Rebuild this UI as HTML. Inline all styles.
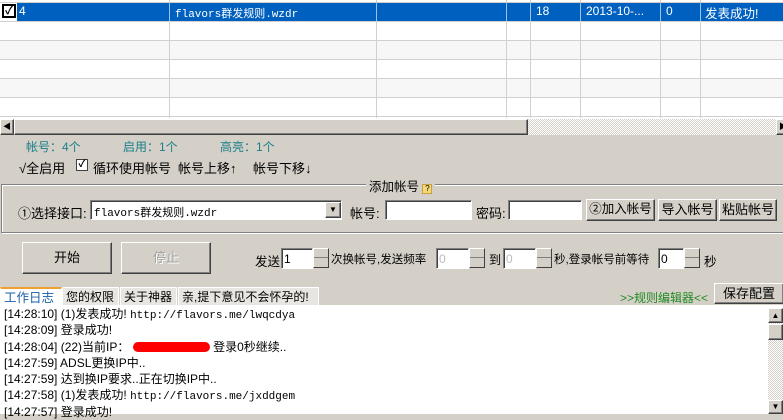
<!DOCTYPE html>
<html><head><meta charset="utf-8"><style>
*{box-sizing:border-box;margin:0;padding:0}
body{width:783px;height:414px;overflow:hidden;background:#d4d0c8;font-family:"Liberation Sans","Noto Sans CJK SC","WenQuanYi Zen Hei",sans-serif;font-size:12px;color:#000;position:relative}
.a{position:absolute;white-space:nowrap}
.mono{font-family:"Liberation Mono","Noto Sans CJK SC",monospace;font-size:11px}
.btn{position:absolute;background:#d4d0c8;border:1px solid;border-color:#fff #404040 #404040 #fff;box-shadow:inset -1px -1px #808080;text-align:center;white-space:nowrap}
.inp{position:absolute;background:#fff;border:1px solid;border-color:#808080 #fff #fff #808080;box-shadow:inset 1px 1px #404040}
.spin{position:absolute;width:16px;height:20px;background:#d4d0c8;border:1px solid;border-color:#fff #404040 #404040 #fff}
.spin:after{content:"";position:absolute;left:0;right:0;top:8px;border-top:1px solid #808080}
.vl{position:absolute;top:0;width:1px;height:118px;background:#d0d0d0}
.hl{position:absolute;left:0;width:783px;height:1px;background:#d0d0d0}
.tab{position:absolute;top:287px;height:19px;background:#e8e6e0;border:1px solid #fff;border-bottom:none;font-size:12px;padding:0 3px;line-height:18px;white-space:nowrap;overflow:visible}
.log div{height:16.3px;line-height:16px;white-space:nowrap}
</style></head><body>
<div class="a" style="left:0;top:0;width:783px;height:119px;background:#fff"></div>
<div class="a" style="left:0;top:40px;width:783px;height:19px;background:#f7f7f7"></div>
<div class="a" style="left:0;top:78px;width:783px;height:19px;background:#f7f7f7"></div>
<div class="hl" style="top:2px"></div>
<div class="hl" style="top:21px"></div><div class="hl" style="top:40px"></div><div class="hl" style="top:59px"></div><div class="hl" style="top:78px"></div><div class="hl" style="top:97px"></div><div class="hl" style="top:116px"></div>
<div class="vl" style="left:169px"></div><div class="vl" style="left:376px"></div><div class="vl" style="left:506px"></div><div class="vl" style="left:530px"></div><div class="vl" style="left:580px"></div><div class="vl" style="left:660px"></div><div class="vl" style="left:700px"></div>
<div class="a" style="left:17px;top:3px;width:766px;height:18px;background:#0060bf"></div>
<div class="vl" style="left:169px;height:19px;top:2px;background:#9fc0e8"></div><div class="vl" style="left:376px;height:19px;top:2px;background:#9fc0e8"></div><div class="vl" style="left:506px;height:19px;top:2px;background:#9fc0e8"></div><div class="vl" style="left:530px;height:19px;top:2px;background:#9fc0e8"></div><div class="vl" style="left:580px;height:19px;top:2px;background:#9fc0e8"></div><div class="vl" style="left:660px;height:19px;top:2px;background:#9fc0e8"></div><div class="vl" style="left:700px;height:19px;top:2px;background:#9fc0e8"></div>
<div class="a" style="left:2px;top:4px;width:14px;height:14px;background:#fff;border:2px solid #000;font-size:11px;line-height:10px;text-align:center;font-weight:bold">✓</div>
<div class="a" style="color:#fff;left:19px;top:4px">4</div>
<div class="a mono" style="color:#fff;left:175px;top:5px">flavors群发规则.wzdr</div>
<div class="a" style="color:#fff;left:536px;top:4px">18</div>
<div class="a" style="color:#fff;left:586px;top:4px">2013-10-...</div>
<div class="a" style="color:#fff;left:666px;top:4px">0</div>
<div class="a" style="color:#fff;left:705px;top:3px;font-size:12.5px">发表成功!</div>
<div class="a" style="left:0;top:119px;width:783px;height:16px;background:repeating-conic-gradient(#fff 0 25%,#d4d0c8 0 50%) 0 0/2px 2px"></div>
<div class="btn" style="left:0;top:119px;width:14px;height:16px;font-size:8px;line-height:14px">◀</div>
<div class="btn" style="left:14px;top:119px;width:514px;height:16px"></div>
<div class="btn" style="left:776px;top:119px;width:14px;height:16px;font-size:8px;line-height:14px">▶</div>
<div class="a" style="left:26px;top:138px;color:#1a7f8a">帐号：4个</div>
<div class="a" style="left:123px;top:138px;color:#1a7f8a">启用：1个</div>
<div class="a" style="left:220px;top:138px;color:#1a7f8a">高亮：1个</div>
<div class="a" style="left:19px;top:158px;font-size:13px">√全启用</div>
<div class="a" style="left:76px;top:159px;width:12px;height:12px;background:#fff;border:1px solid #404040;font-size:10px;line-height:10px;text-align:center;font-weight:bold">✓</div>
<div class="a" style="left:93px;top:158px;font-size:13px">循环使用帐号</div>
<div class="a" style="left:178px;top:158px;font-size:13px">帐号上移↑</div>
<div class="a" style="left:253px;top:158px;font-size:13px">帐号下移↓</div>
<div class="a" style="left:1px;top:184px;width:784px;height:49px;border:1px solid #808080;box-shadow:1px 1px #fff,inset 1px 1px #fff"></div>
<div class="a" style="left:366px;top:176px;background:#d4d0c8;padding:0 3px;font-size:12.5px">添加帐号 <span style="display:inline-block;width:10px;height:10px;background:#f4d77a;border:1px solid #c8a040;font-size:8px;line-height:8px;text-align:center">?</span></div>
<div class="a" style="left:18px;top:203px;font-size:13px">①选择接口:</div>
<div class="inp" style="left:90px;top:200px;width:252px;height:20px"></div>
<div class="a mono" style="left:94px;top:204px">flavors群发规则.wzdr</div>
<div class="btn" style="left:325px;top:202px;width:16px;height:16px;font-size:8px;line-height:14px">▼</div>
<div class="a" style="left:350px;top:203px;font-size:13px">帐号:</div>
<div class="inp" style="left:385px;top:200px;width:87px;height:20px"></div>
<div class="a" style="left:476px;top:203px;font-size:13px">密码:</div>
<div class="inp" style="left:508px;top:200px;width:74px;height:20px"></div>
<div class="btn" style="left:586px;top:199px;width:69px;height:22px;line-height:19px;font-size:12.5px">②加入帐号</div>
<div class="btn" style="left:658px;top:199px;width:59px;height:22px;line-height:19px;font-size:13px">导入帐号</div>
<div class="btn" style="left:719px;top:199px;width:58px;height:22px;line-height:19px;font-size:13px">粘贴帐号</div>
<div class="btn" style="left:22px;top:242px;width:90px;height:32px;line-height:29px;font-size:13px">开始</div>
<div class="btn" style="left:121px;top:242px;width:90px;height:32px;line-height:29px;font-size:13px;color:#a0a0a0;text-shadow:1px 1px #fff">停止</div>
<div class="a" style="left:255px;top:251px;font-size:12.5px">发送</div>
<div class="inp" style="left:281px;top:248px;width:32px;height:21px"></div><div class="a" style="left:284px;top:252px">1</div>
<div class="spin" style="left:313px;top:248px"></div>
<div class="a" style="left:331px;top:251px;font-size:11.5px">次换帐号,发送频率</div>
<div class="inp" style="left:436px;top:248px;width:33px;height:21px"></div><div class="a" style="left:439px;top:252px;color:#bbb">0</div>
<div class="spin" style="left:469px;top:248px"></div>
<div class="a" style="left:489px;top:251px;font-size:12px">到</div>
<div class="inp" style="left:503px;top:248px;width:33px;height:21px"></div><div class="a" style="left:506px;top:252px;color:#bbb">0</div>
<div class="spin" style="left:536px;top:248px"></div>
<div class="a" style="left:554px;top:251px;font-size:11.5px">秒,登录帐号前等待</div>
<div class="inp" style="left:658px;top:248px;width:26px;height:21px"></div><div class="a" style="left:661px;top:252px">0</div>
<div class="spin" style="left:684px;top:248px"></div>
<div class="a" style="left:704px;top:251px;font-size:12.5px">秒</div>
<div class="tab" style="left:0;width:62px;background:#fff;border-top:2px solid #f0a030;color:#1a5fa8;font-size:12.5px">工作日志</div>
<div class="tab" style="left:62px;width:57px">您的权限</div>
<div class="tab" style="left:120px;width:57px">关于神器</div>
<div class="tab" style="left:178px;width:141px">亲,提下意见不会怀孕的!</div>
<div class="a" style="left:620px;top:289px;color:#228b22;font-size:12px">&gt;&gt;规则编辑器&lt;&lt;</div>
<div class="btn" style="left:714px;top:283px;width:70px;height:21px;line-height:19px;font-size:13px">保存配置</div>
<div class="a" style="left:0;top:305px;width:783px;height:109px;background:#fff"></div>
<div class="a" style="left:768px;top:308px;width:15px;height:106px;background:repeating-conic-gradient(#fff 0 25%,#d4d0c8 0 50%) 0 0/2px 2px"></div>
<div class="btn" style="left:768px;top:308px;width:15px;height:15px;font-size:8px;line-height:13px">▲</div>
<div class="btn" style="left:768px;top:324px;width:15px;height:16px"></div>
<div class="btn" style="left:768px;top:400px;width:15px;height:14px;font-size:8px;line-height:12px">▼</div>
<div class="a log" style="left:4px;top:306px;font-size:12px">
<div>[14:28:10] (1)发表成功! <span class="mono">http://flavors.me/lwqcdya</span></div>
<div>[14:28:09] 登录成功!</div>
<div>[14:28:04] (22)当前IP： <span style="display:inline-block;width:77px;height:10px;background:#f00;border-radius:5px;vertical-align:middle"></span> 登录0秒继续..</div>
<div>[14:27:59] ADSL更换IP中..</div>
<div>[14:27:59] 达到换IP要求..正在切换IP中..</div>
<div>[14:27:58] (1)发表成功! <span class="mono">http://flavors.me/jxddgem</span></div>
<div>[14:27:57] 登录成功!</div>
</div>
</body></html>
